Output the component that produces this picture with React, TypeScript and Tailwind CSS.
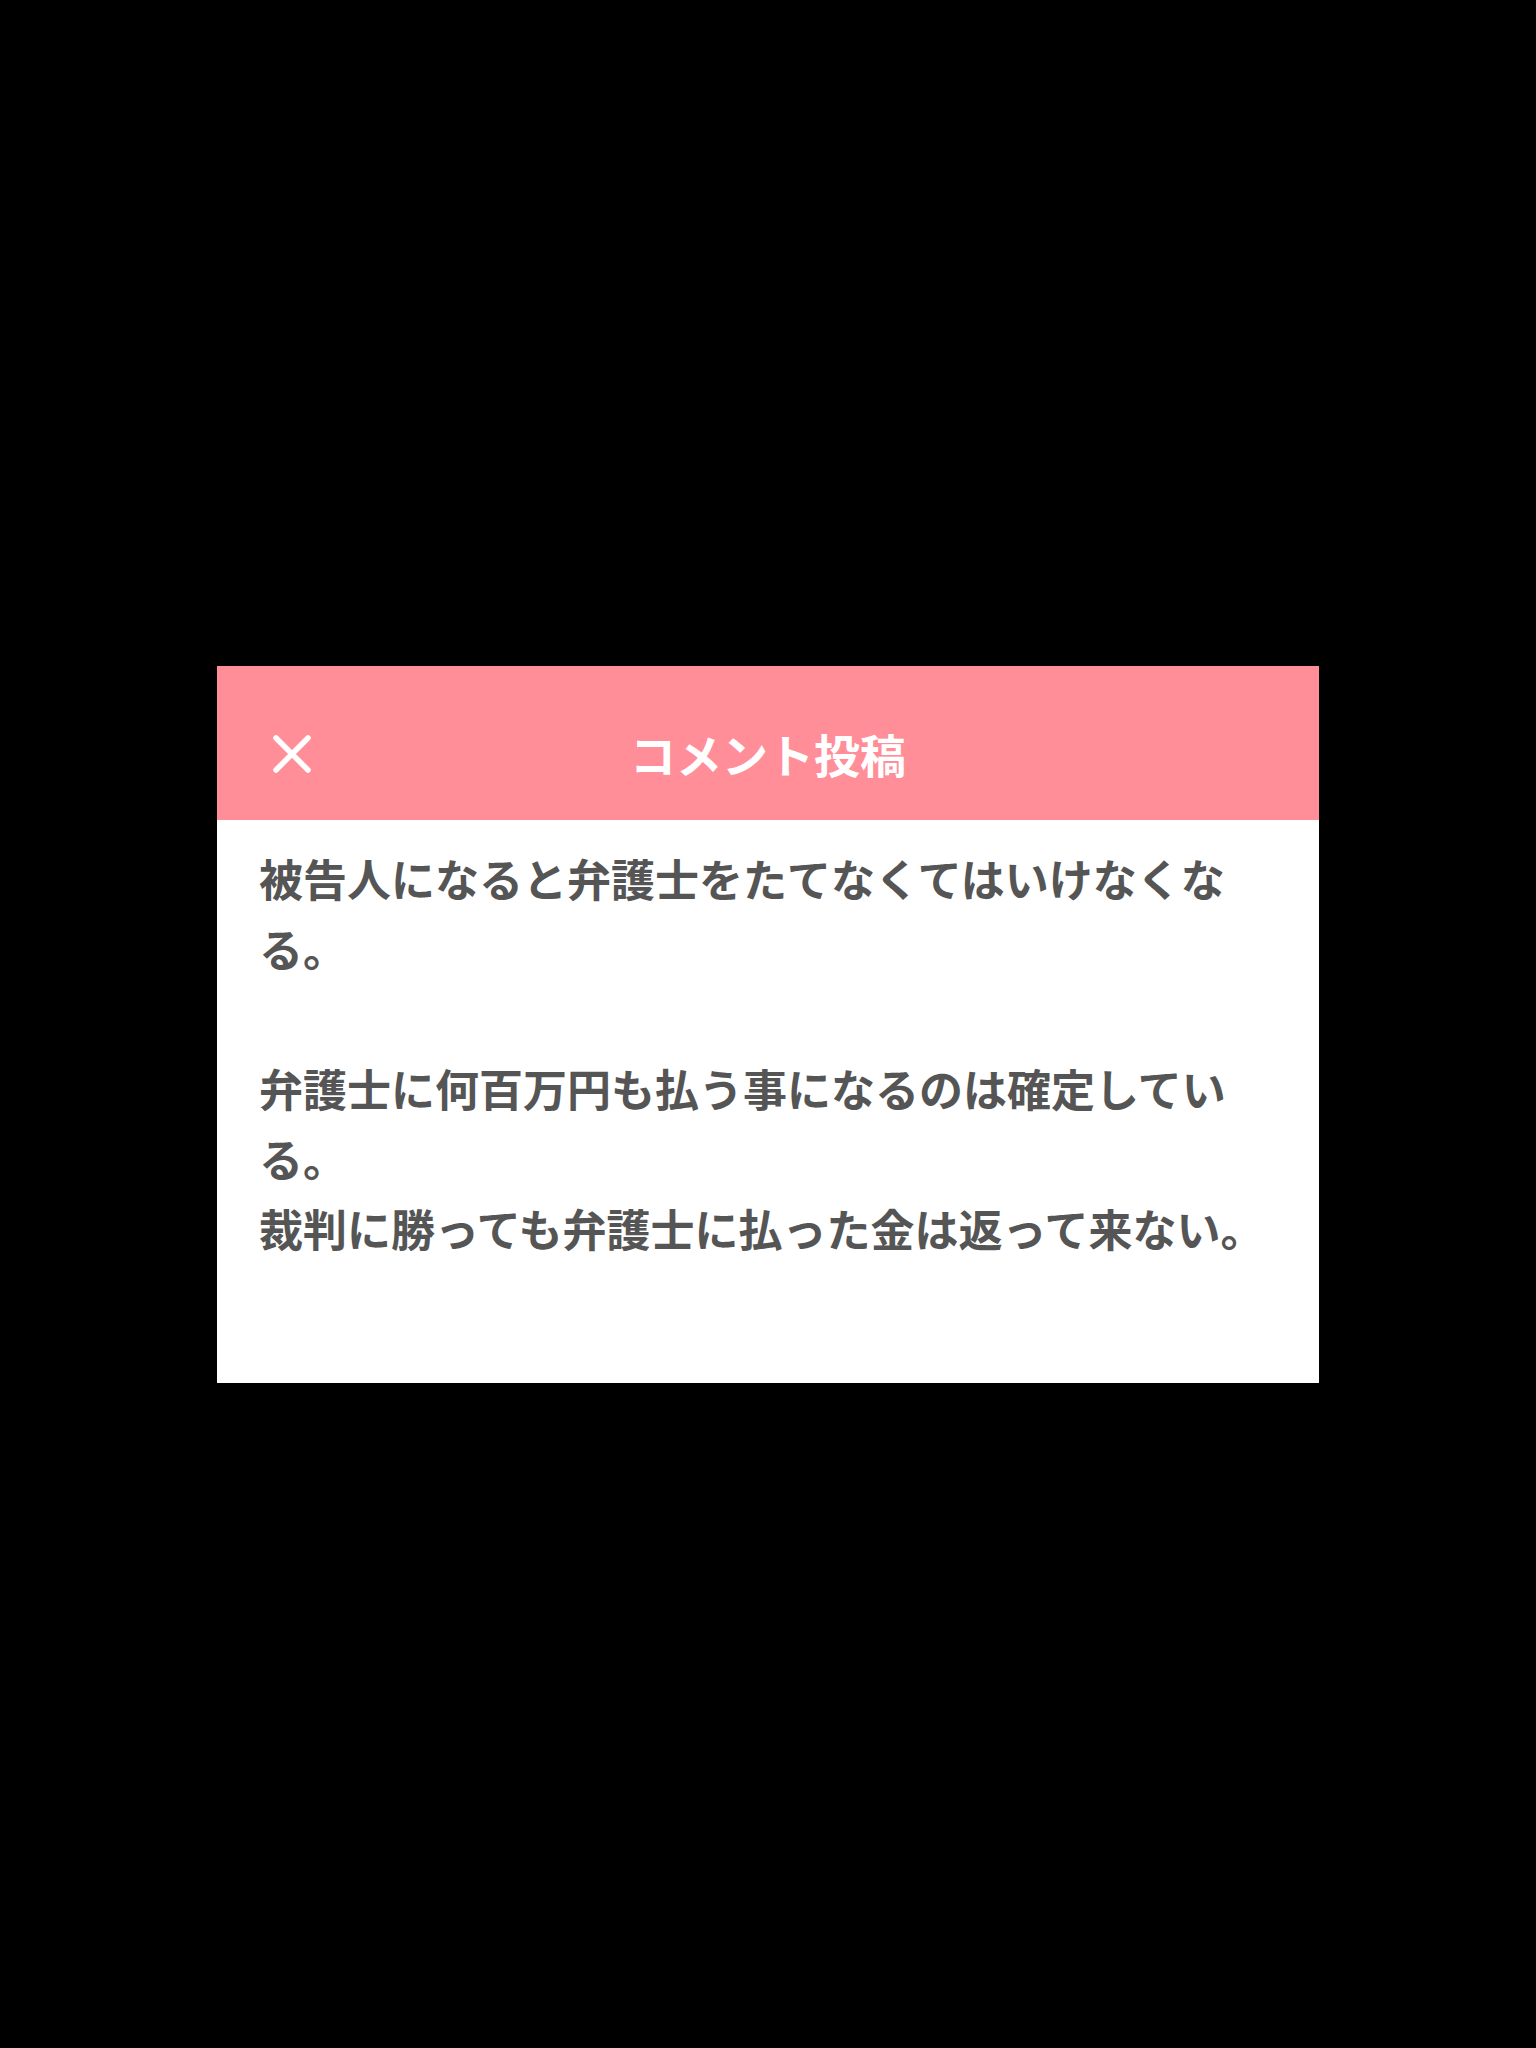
const body = `被告人になると弁護士をたてなくてはいけなくなる。

弁護士に何百万円も払う事になるのは確定している。
裁判に勝っても弁護士に払った金は返って来ない。`;

function CloseIcon() {
  return (
    <svg width="40" height="40" viewBox="0 0 40 40" fill="none">
      <path
        d="M4 4 L36 36 M36 4 L4 36"
        stroke="white"
        strokeWidth="5.5"
        strokeLinecap="round"
      />
    </svg>
  );
}

export default function App() {
  return (
    <div
      className="flex min-h-screen items-center justify-center bg-black"
      style={{ fontFamily: '"Noto Sans CJK JP", "Noto Sans", sans-serif' }}
    >
      <div className="w-[1102px] bg-white">
        <header className="relative flex h-[154px] items-center justify-center bg-[#ff8e99] pt-[20px]">
          <button type="button" className="absolute left-[55px] top-[68px]">
            <CloseIcon />
          </button>
          <h1 className="text-[46px] font-semibold leading-none text-white">コメント投稿</h1>
        </header>

        <div className="h-[563px] px-[42px] pt-[23px]">
          <p className="whitespace-pre-wrap text-[44px] font-bold leading-[70px] text-[#555555]">
            {body}
          </p>
        </div>
      </div>
    </div>
  );
}
